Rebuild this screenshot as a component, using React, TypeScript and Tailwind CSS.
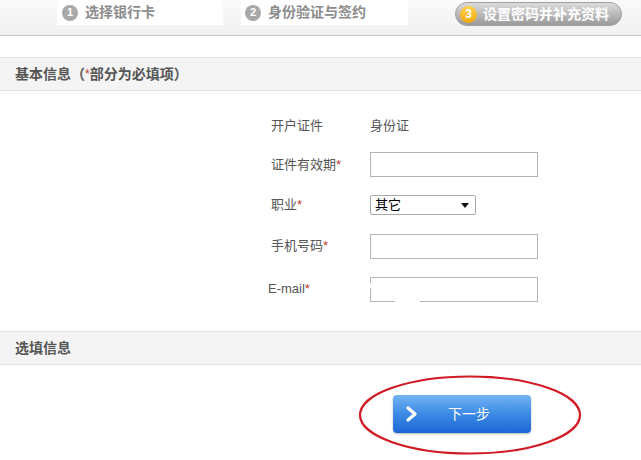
const font = { fontFamily: '"Liberation Sans", "Noto Sans CJK SC", sans-serif' }

function Star() {
  return <span className="text-[#c0392b]">*</span>
}

function StepBar() {
  return (
    <div className="flex h-[36px] items-start border-b border-[#c8c8c8] bg-gradient-to-b from-[#fafafa] to-[#f1f1f1]">
      <div className="ml-[57px] flex h-[25px] w-[166px] items-center gap-[7px] bg-white pl-[5px]">
        <span className="flex h-4 w-4 items-center justify-center rounded-full bg-[#a8a8a8] text-[11px] font-bold text-white">1</span>
        <span className="text-[14px] font-bold text-[#8c8c8c]">选择银行卡</span>
      </div>
      <div className="ml-[18px] flex h-[25px] w-[167px] items-center gap-[7px] bg-white pl-[4px]">
        <span className="flex h-4 w-4 items-center justify-center rounded-full bg-[#a8a8a8] text-[11px] font-bold text-white">2</span>
        <span className="text-[14px] font-bold text-[#8c8c8c]">身份验证与签约</span>
      </div>
      <div className="ml-[47px] mt-[2px] flex h-[24px] w-[167px] items-center gap-[6px] rounded-full border border-[#a0a0a0] bg-gradient-to-b from-[#dcdcdc] to-[#9a9a9a] pl-[4px]">
        <span className="flex h-[17px] w-[17px] items-center justify-center rounded-full bg-gradient-to-b from-[#ffd24a] to-[#f0a800] text-[12px] font-bold text-white">3</span>
        <span className="text-[14px] font-bold text-white">设置密码并补充资料</span>
      </div>
    </div>
  )
}

function SectionBar({ children }: { children: React.ReactNode }) {
  return (
    <div className="flex h-[34px] items-center border-y border-[#e3e3e3] bg-[#f4f4f4] pl-[15px] text-[14px] font-bold text-[#555]">
      {children}
    </div>
  )
}

function Row({ label, h, children }: { label: React.ReactNode; h: string; children: React.ReactNode }) {
  return (
    <div className={`flex items-center ${h}`}>
      <div className="w-[99px] text-[13px] text-[#555]">{label}</div>
      {children}
    </div>
  )
}

function App() {
  return (
    <main className="h-[460px] w-[641px] overflow-hidden bg-white" style={font}>
      <StepBar />
      <div className="mt-[21px]">
        <SectionBar>
          基本信息（<span className="text-[12px] font-normal text-[#c0392b]">*</span>部分为必填项）
        </SectionBar>
      </div>

      <div className="ml-[271px] pt-[15px]">
        <Row label="开户证件" h="h-10">
          <span className="text-[13px] text-[#555]">身份证</span>
        </Row>
        <Row label={<>证件有效期<Star /></>} h="h-[37px]">
          <input className="h-[25px] w-[168px] border border-[#b4b4b4] bg-white outline-none" />
        </Row>
        <Row label={<>职业<Star /></>} h="h-[44px]">
          <div className="flex h-[20px] w-[106px] items-center justify-between rounded-[2px] border border-[#a9a9a9] bg-white pl-[4px] pr-[6px] text-[13px] text-black">
            <span>其它</span>
            <svg width="8" height="5" viewBox="0 0 8 5"><path d="M0 0H8L4 5Z" fill="#111" /></svg>
          </div>
        </Row>
        <Row label={<>手机号码<Star /></>} h="h-[38px]">
          <input className="h-[25px] w-[168px] border border-[#b4b4b4] bg-white outline-none" />
        </Row>
        <Row label={<span className="-ml-[3px] pt-[2px]">E-mail<Star /></span>} h="h-[48px]">
          <div className="relative">
            <input className="h-[25px] w-[168px] border border-[#b4b4b4] bg-white outline-none" />
            {/* redacted patch in the original screenshot */}
            <div className="absolute bottom-[-1px] left-[25px] h-[3px] w-[25px] bg-white" />
            <div className="absolute left-[-1px] top-[6px] h-[5px] w-[2px] bg-white" />
          </div>
        </Row>
      </div>

      <div className="mt-[18px]">
        <SectionBar>选填信息</SectionBar>
      </div>

      <div className="relative pt-[30px]">
        <button className="ml-[393px] flex h-[38px] w-[138px] items-center rounded-[4px] bg-gradient-to-b from-[#73b4f4] via-[#3b8ae4] to-[#1c66d4] shadow-[0_1px_2px_rgba(0,0,0,0.3)]">
          <svg className="ml-[12px]" width="14" height="16" viewBox="0 0 14 16">
            <path d="M3 2L10 8L3 14" fill="none" stroke="#fff" strokeWidth="3.2" strokeLinecap="round" strokeLinejoin="round" />
          </svg>
          <span className="ml-[29px] text-[14px] text-white">下一步</span>
        </button>
        <svg className="absolute left-[357px] top-[9px]" width="226" height="82" viewBox="0 0 226 82">
          <ellipse cx="113" cy="41" rx="110" ry="38.5" fill="none" stroke="#d11a24" strokeWidth="2.2" />
        </svg>
      </div>
    </main>
  )
}

export default App
